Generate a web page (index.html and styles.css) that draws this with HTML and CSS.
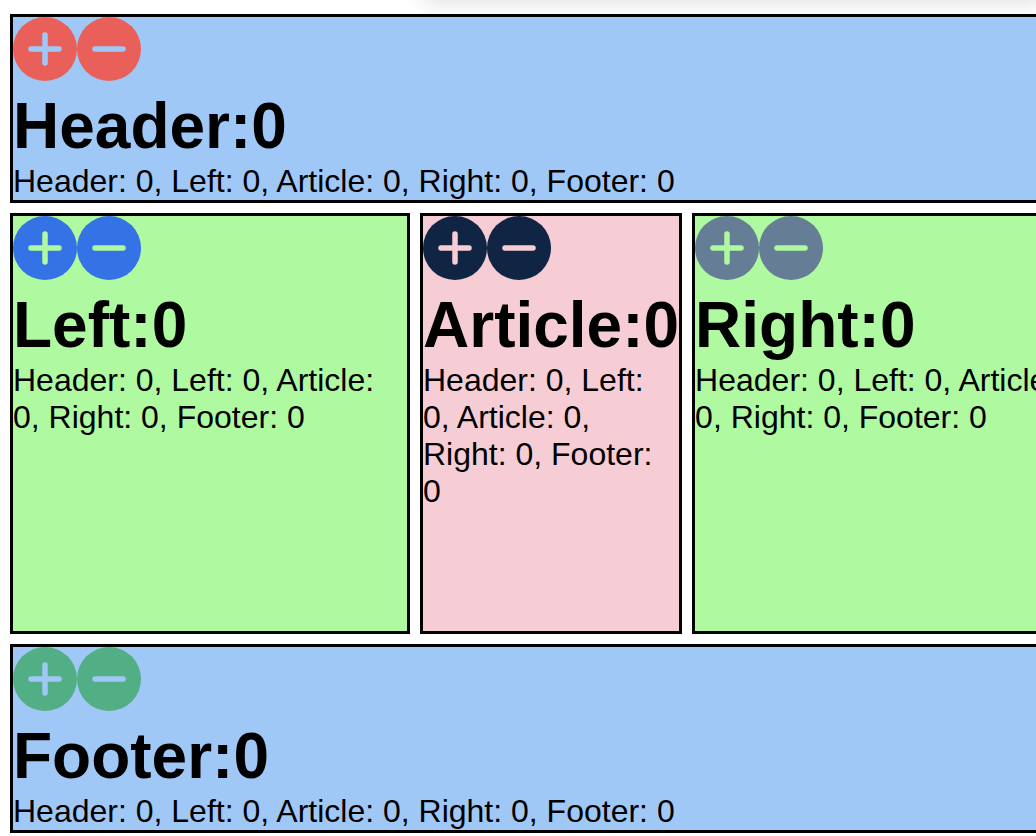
FILE: index.html
```html
<!DOCTYPE html>
<html lang="en">
<head>
<meta charset="utf-8">
<meta name="viewport" content="width=device-width, initial-scale=1">
<title>Counters</title>
<link rel="stylesheet" href="styles.css">
</head>
<body>
<svg class="sprite" aria-hidden="true">
  <symbol id="plus" viewBox="0 0 64 64">
    <circle cx="32" cy="32" r="32" fill="currentColor"/>
    <path class="sign" d="M18 32h28M32 18v28"/>
  </symbol>
  <symbol id="minus" viewBox="0 0 64 64">
    <circle cx="32" cy="32" r="32" fill="currentColor"/>
    <path class="sign" d="M18 32h28"/>
  </symbol>
</svg>
<div class="top-shadow"></div>
<div class="layout">
  <header class="panel panel-wide tone-red">
    <div class="controls">
      <button class="round" type="button" aria-label="Increase header"><svg class="icon"><use href="#plus"/></svg></button>
      <button class="round" type="button" aria-label="Decrease header"><svg class="icon"><use href="#minus"/></svg></button>
    </div>
    <h1 class="title">Header:0</h1>
    <p class="summary">Header: 0, Left: 0, Article: 0, Right: 0, Footer: 0</p>
  </header>
  <aside class="panel panel-side tone-blue">
    <div class="controls">
      <button class="round" type="button" aria-label="Increase left"><svg class="icon"><use href="#plus"/></svg></button>
      <button class="round" type="button" aria-label="Decrease left"><svg class="icon"><use href="#minus"/></svg></button>
    </div>
    <h1 class="title">Left:0</h1>
    <p class="summary">Header: 0, Left: 0, Article: 0, Right: 0, Footer: 0</p>
  </aside>
  <article class="panel panel-article tone-navy">
    <div class="controls">
      <button class="round" type="button" aria-label="Increase article"><svg class="icon"><use href="#plus"/></svg></button>
      <button class="round" type="button" aria-label="Decrease article"><svg class="icon"><use href="#minus"/></svg></button>
    </div>
    <h1 class="title">Article:0</h1>
    <p class="summary">Header: 0, Left: 0, Article: 0, Right: 0, Footer: 0</p>
  </article>
  <aside class="panel panel-side tone-slate">
    <div class="controls">
      <button class="round" type="button" aria-label="Increase right"><svg class="icon"><use href="#plus"/></svg></button>
      <button class="round" type="button" aria-label="Decrease right"><svg class="icon"><use href="#minus"/></svg></button>
    </div>
    <h1 class="title">Right:0</h1>
    <p class="summary">Header: 0, Left: 0, Article: 0, Right: 0, Footer: 0</p>
  </aside>
  <footer class="panel panel-wide tone-green">
    <div class="controls">
      <button class="round" type="button" aria-label="Increase footer"><svg class="icon"><use href="#plus"/></svg></button>
      <button class="round" type="button" aria-label="Decrease footer"><svg class="icon"><use href="#minus"/></svg></button>
    </div>
    <h1 class="title">Footer:0</h1>
    <p class="summary">Header: 0, Left: 0, Article: 0, Right: 0, Footer: 0</p>
  </footer>
</div>
</body>
</html>
```

FILE: styles.css
```css
* {
  box-sizing: border-box;
}

html {
  scrollbar-width: none;
}

body {
  margin: 0;
  background: #fff;
  color: #000;
  font-family: "Liberation Sans", Arial, sans-serif;
  font-size: 32px;
  line-height: 37px;
}

.sprite {
  position: absolute;
  width: 0;
  height: 0;
}

.sign {
  fill: none;
  stroke: var(--panel);
  stroke-width: 5.5;
  stroke-linecap: round;
}

/* Shadow cast by a bar above the page edge */
.top-shadow {
  position: absolute;
  top: -40px;
  left: 416px;
  right: 0;
  height: 40px;
  box-shadow: 8px 0 24px rgba(0, 0, 0, 0.16);
}

.layout {
  position: relative;
  display: grid;
  grid-template-columns: 400px 1fr 400px;
  grid-template-rows: auto 1fr auto;
  gap: 10px;
  width: min-content;
  min-width: 100%;
  min-height: 100vh;
  padding: 14px 10px 3px;
}

.panel {
  border: 3px solid #000;
  background: var(--panel);
}

.panel-wide {
  --panel: #a0c8f6;
  grid-column: 1 / -1;
}

.panel-side {
  --panel: #aff9a1;
}

.panel-article {
  --panel: #f6cdd5;
}

.tone-red {
  --tone: #e9605a;
}

.tone-blue {
  --tone: #3472e6;
}

.tone-navy {
  --tone: #102443;
}

.tone-slate {
  --tone: #667d96;
}

.tone-green {
  --tone: #52ae85;
}

.controls {
  display: flex;
  margin-bottom: 8px;
}

.round {
  width: 64px;
  height: 64px;
  padding: 0;
  border: 0;
  border-radius: 50%;
  background: none;
  color: var(--tone);
  cursor: pointer;
}

.icon {
  display: block;
  width: 100%;
  height: 100%;
}

.title {
  margin: 0;
  font-size: 64px;
  line-height: 74px;
}

.summary {
  margin: 0;
}
```
